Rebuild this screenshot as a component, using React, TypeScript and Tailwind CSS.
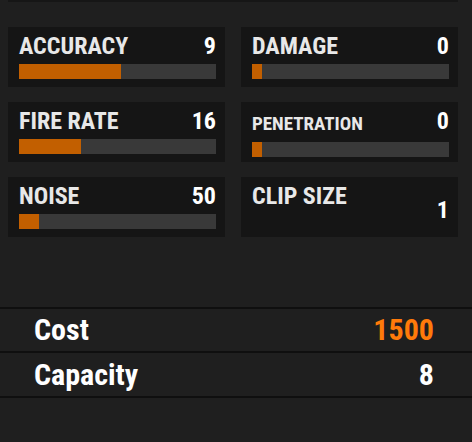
import React from 'react';

type Stat = { label: string; value: number; fill?: number; small?: boolean; noBar?: boolean };

const stats: Stat[] = [
  { label: 'ACCURACY', value: 9, fill: 52 },
  { label: 'DAMAGE', value: 0, fill: 5 },
  { label: 'FIRE RATE', value: 16, fill: 31.5 },
  { label: 'PENETRATION', value: 0, fill: 5, small: true },
  { label: 'NOISE', value: 50, fill: 10 },
  { label: 'CLIP SIZE', value: 1, noBar: true },
];

const StatCard: React.FC<{ stat: Stat }> = ({ stat }) => (
  <div className="h-[60px] bg-[#151515] pl-[11px] pr-[9px] pt-[7px]">
    <div className="flex items-start justify-between">
      <span
        className={
          stat.small
            ? 'mt-[3px] text-[19px] leading-[24px] font-bold text-[#e8e8e8]'
            : 'text-[24px] leading-[24px] font-bold text-[#e8e8e8]'
        }
      >
        {stat.label}
      </span>
      <span className={stat.noBar ? 'mt-[14px] text-[24px] leading-[24px] font-bold text-white' : 'text-[24px] leading-[24px] font-bold text-white'}>
        {stat.value}
      </span>
    </div>
    {!stat.noBar && (
      <div className="mt-[6px] h-[15px] bg-[#393939]">
        <div className="h-full bg-[#c25f00]" style={{ width: `${stat.fill}%` }} />
      </div>
    )}
  </div>
);

const App: React.FC = () => {
  return (
    <div className="h-[442px] w-[472px] overflow-hidden bg-[#1f1f1f] font-['Roboto_Condensed',Roboto,'Liberation_Sans',sans-serif]">
      <div className="ml-2 mr-[14px] h-[2px] bg-[#161616]" />

      <div className="ml-2 mr-[14px] mt-[25px] grid grid-cols-2 gap-x-4 gap-y-[15px]">
        {stats.map((s) => (
          <StatCard key={s.label} stat={s} />
        ))}
      </div>

      <div className="mt-[70px] border-t-2 border-[#0f0f0f]">
        <div className="flex items-center justify-between border-b-2 border-[#0f0f0f] pl-[34px] pr-[38px] h-[44px]">
          <span className="text-[30px] leading-[42px] font-bold text-white">Cost</span>
          <span className="text-[30px] leading-[42px] font-bold text-[#ff7a0a]">1500</span>
        </div>
        <div className="flex items-center justify-between border-b-2 border-[#0f0f0f] pl-[34px] pr-[38px] h-[45px]">
          <span className="text-[30px] leading-[42px] font-bold text-white">Capacity</span>
          <span className="text-[30px] leading-[42px] font-bold text-white">8</span>
        </div>
      </div>
    </div>
  );
};

export default App;
